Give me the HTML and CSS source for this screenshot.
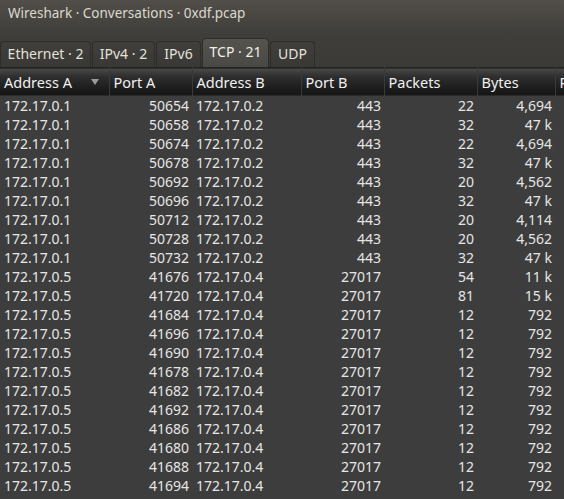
FILE: index.html
```html
<!DOCTYPE html>
<html>
<head>
<meta charset="utf-8">
<link rel="stylesheet" href="styles.css">
</head>
<body>
<div class="window">
  <div class="top">
    <div class="titlebar">Wireshark · Conversations · 0xdf.pcap</div>
    <div class="tabs">
      <div class="tab t-eth">Ethernet · 2</div>
      <div class="tab t-ipv4">IPv4 · 2</div>
      <div class="tab t-ipv6">IPv6</div>
      <div class="tab t-tcp active">TCP · 21</div>
      <div class="tab t-udp">UDP</div>
    </div>
  </div>
  <table class="grid">
    <colgroup>
      <col class="c1"><col class="c2"><col class="c3"><col class="c4"><col class="c5"><col class="c6"><col class="c7">
    </colgroup>
    <thead>
      <tr>
        <th>Address A<span class="sort"></span></th>
        <th>Port A</th>
        <th>Address B</th>
        <th>Port B</th>
        <th>Packets</th>
        <th>Bytes</th>
        <th>Packets A → B</th>
      </tr>
    </thead>
    <tbody id="rows">
      <tr><td>172.17.0.1</td><td class="r">50654</td><td>172.17.0.2</td><td class="r">443</td><td class="r">22</td><td class="r">4,694</td><td></td></tr>
      <tr><td>172.17.0.1</td><td class="r">50658</td><td>172.17.0.2</td><td class="r">443</td><td class="r">32</td><td class="r">47 k</td><td></td></tr>
      <tr><td>172.17.0.1</td><td class="r">50674</td><td>172.17.0.2</td><td class="r">443</td><td class="r">22</td><td class="r">4,694</td><td></td></tr>
      <tr><td>172.17.0.1</td><td class="r">50678</td><td>172.17.0.2</td><td class="r">443</td><td class="r">32</td><td class="r">47 k</td><td></td></tr>
      <tr><td>172.17.0.1</td><td class="r">50692</td><td>172.17.0.2</td><td class="r">443</td><td class="r">20</td><td class="r">4,562</td><td></td></tr>
      <tr><td>172.17.0.1</td><td class="r">50696</td><td>172.17.0.2</td><td class="r">443</td><td class="r">32</td><td class="r">47 k</td><td></td></tr>
      <tr><td>172.17.0.1</td><td class="r">50712</td><td>172.17.0.2</td><td class="r">443</td><td class="r">20</td><td class="r">4,114</td><td></td></tr>
      <tr><td>172.17.0.1</td><td class="r">50728</td><td>172.17.0.2</td><td class="r">443</td><td class="r">20</td><td class="r">4,562</td><td></td></tr>
      <tr><td>172.17.0.1</td><td class="r">50732</td><td>172.17.0.2</td><td class="r">443</td><td class="r">32</td><td class="r">47 k</td><td></td></tr>
      <tr><td>172.17.0.5</td><td class="r">41676</td><td>172.17.0.4</td><td class="r">27017</td><td class="r">54</td><td class="r">11 k</td><td></td></tr>
      <tr><td>172.17.0.5</td><td class="r">41720</td><td>172.17.0.4</td><td class="r">27017</td><td class="r">81</td><td class="r">15 k</td><td></td></tr>
      <tr><td>172.17.0.5</td><td class="r">41684</td><td>172.17.0.4</td><td class="r">27017</td><td class="r">12</td><td class="r">792</td><td></td></tr>
      <tr><td>172.17.0.5</td><td class="r">41696</td><td>172.17.0.4</td><td class="r">27017</td><td class="r">12</td><td class="r">792</td><td></td></tr>
      <tr><td>172.17.0.5</td><td class="r">41690</td><td>172.17.0.4</td><td class="r">27017</td><td class="r">12</td><td class="r">792</td><td></td></tr>
      <tr><td>172.17.0.5</td><td class="r">41678</td><td>172.17.0.4</td><td class="r">27017</td><td class="r">12</td><td class="r">792</td><td></td></tr>
      <tr><td>172.17.0.5</td><td class="r">41682</td><td>172.17.0.4</td><td class="r">27017</td><td class="r">12</td><td class="r">792</td><td></td></tr>
      <tr><td>172.17.0.5</td><td class="r">41692</td><td>172.17.0.4</td><td class="r">27017</td><td class="r">12</td><td class="r">792</td><td></td></tr>
      <tr><td>172.17.0.5</td><td class="r">41686</td><td>172.17.0.4</td><td class="r">27017</td><td class="r">12</td><td class="r">792</td><td></td></tr>
      <tr><td>172.17.0.5</td><td class="r">41680</td><td>172.17.0.4</td><td class="r">27017</td><td class="r">12</td><td class="r">792</td><td></td></tr>
      <tr><td>172.17.0.5</td><td class="r">41688</td><td>172.17.0.4</td><td class="r">27017</td><td class="r">12</td><td class="r">792</td><td></td></tr>
      <tr><td>172.17.0.5</td><td class="r">41694</td><td>172.17.0.4</td><td class="r">27017</td><td class="r">12</td><td class="r">792</td><td></td></tr>
    </tbody>
  </table>
</div>
</body>
</html>
```

FILE: styles.css
```css
html, body {
  margin: 0;
  padding: 0;
  background: #3d3d3d;
  overflow: hidden;
}
.window {
  width: 564px;
  height: 499px;
  overflow: hidden;
  font-family: "Noto Sans", "DejaVu Sans", sans-serif;
  background: #3d3d3d;
}
.top {
  background: linear-gradient(#524f4a 0%, #403e3a 50%, #3b3a37 100%);
  height: 67px;
  display: flex;
  flex-direction: column;
}
.titlebar {
  height: 30px;
  box-sizing: border-box;
  padding: 3px 0 0 8px;
  font-size: 13.5px;
  line-height: 20px;
  color: #dcd8cf;
}
.tabs {
  flex: 1;
  display: flex;
  align-items: flex-end;
  gap: 1px;
}
.tab {
  height: 26px;
  box-sizing: border-box;
  border: 1px solid #2e2d2a;
  border-bottom: none;
  border-radius: 4px 4px 0 0;
  background: linear-gradient(#403f3b, #393835);
  color: #e4e1da;
  font-size: 14px;
  line-height: 24px;
  text-align: center;
}
.tab.active {
  height: 29px;
  line-height: 26px;
  background: linear-gradient(#55534e, #4a4945);
  color: #f2f0ea;
}
.t-eth { width: 91px; }
.t-ipv4 { width: 63px; }
.t-ipv6 { width: 45px; }
.t-tcp { width: 67px; }
.t-udp { width: 45px; }

.grid {
  border-collapse: collapse;
  table-layout: fixed;
  width: 620px;
  font-size: 14px;
  color: #e6e6e6;
}
.c1 { width: 109px; }
.c2 { width: 83px; }
.c3 { width: 109px; }
.c4 { width: 83px; }
.c5 { width: 93px; }
.c6 { width: 78px; }
.c7 { width: 65px; }

.grid th {
  height: 27px;
  padding: 0 0 0 4px;
  text-align: left;
  font-weight: normal;
  font-size: 14.5px;
  color: #f0f0f0;
  white-space: nowrap;
  overflow: hidden;
  background: linear-gradient(#4a4a4a 0%, #2e2e2e 30%, #1c1c1c 75%, #151515 100%);
  border-right: 1px solid #3a3a3a;
  border-top: 1px solid #232323;
  position: relative;
}
.sort {
  position: absolute;
  right: 10px;
  top: 11px;
  width: 0;
  height: 0;
  border-left: 4px solid transparent;
  border-right: 4px solid transparent;
  border-top: 6px solid #9a9a9a;
}
.grid td {
  height: 19px;
  padding: 0 0 0 4px;
  line-height: 19px;
  white-space: nowrap;
  overflow: hidden;
}
.grid td.r {
  text-align: right;
  padding: 0 3px 0 0;
}
.grid tbody {
  border-top: 1px solid #2a2a2a;
}
```
